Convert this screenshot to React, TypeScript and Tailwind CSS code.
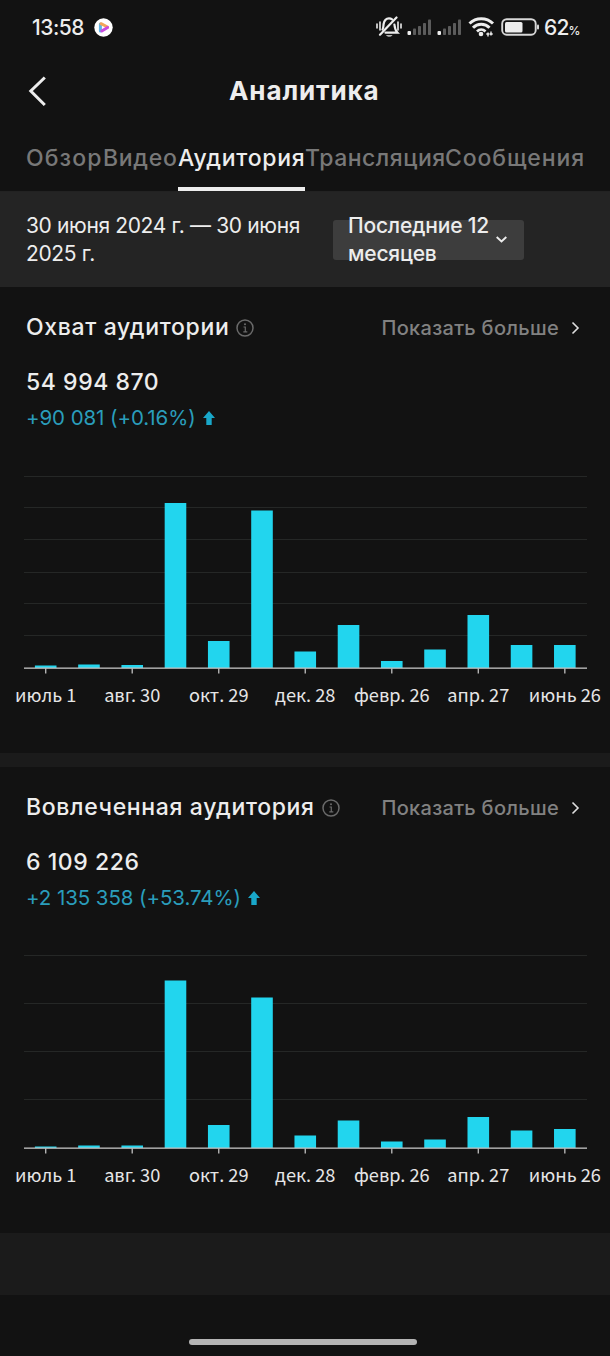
import clsx from "clsx";

const TABS = [
  { label: "Обзор", className: "w-[77px] tracking-[1.1px]" },
  { label: "Видео", className: "w-[75px] tracking-[0.7px]" },
  { label: "Аудитория", className: "w-[127px] tracking-[0.7px]", active: true },
  { label: "Трансляция", className: "w-[140px] tracking-[0.5px]" },
  { label: "Сообщения", className: "w-[140px] tracking-[0.9px]" },
];

const MONTHS = ["июль 1", "авг. 30", "окт. 29", "дек. 28", "февр. 26", "апр. 27", "июнь 26"];

const REACH = [2.5, 3.5, 3, 165, 27, 157.5, 16.5, 43, 7, 18.5, 53, 23, 23];
const ENGAGED = [1.5, 2.5, 2.5, 167.5, 23, 150.5, 12.5, 27.5, 6.5, 8.5, 31, 17.5, 19];

function SignalIcon() {
  return (
    <svg width="26" height="18" viewBox="0 0 26 18" fill="#5c5c5c">
      <rect x="0.5" y="13" width="3.5" height="4" rx="1" fill="#ededed" />
      <rect x="6" y="10.5" width="3" height="6.5" rx="0.8" />
      <rect x="11" y="8" width="3" height="9" rx="0.8" />
      <rect x="16" y="5" width="3" height="12" rx="0.8" />
      <rect x="21" y="1.5" width="3" height="15.5" rx="0.8" />
    </svg>
  );
}

function StatusBar() {
  return (
    <div className="flex h-[54px] items-center pl-8">
      <span className="w-[62px] pt-px text-[21px] font-medium tracking-[-0.5px] whitespace-nowrap">13:58</span>
      <svg width="19" height="19" viewBox="0 0 19 19">
        <circle cx="9.5" cy="9.5" r="9.2" fill="#fff" />
        <path d="M6.4 13V6" stroke="#5eb4e6" strokeWidth="3" strokeLinecap="round" />
        <path d="M7 5.700L13.500 9" stroke="#f2a65a" strokeWidth="3" strokeLinecap="round" />
        <path d="M13.600 9.500L7.800 13" stroke="#c94be0" strokeWidth="3" strokeLinecap="round" />
      </svg>
      <div className="ml-[263px] flex items-center">
        <svg width="26" height="22" viewBox="0 0 26 22" fill="none" stroke="#ededed" strokeLinecap="round">
          <path d="M1 8v4M4 6v8M22 6v8M25 8v4" strokeWidth="1.600" />
          <path d="M6.500 13.500C7.500 12 7.300 10 7.600 8C8.200 4.500 10.300 2.300 13 2.300c1.300 0 2.300.4 3.100 1M18.400 8.500C18.700 12 19 14 21.500 16.700H9.500" strokeWidth="2.200" />
          <path d="M20.500 1.500L4 18.700" strokeWidth="2.200" />
          <path d="M10 19h6.500c-.8 2.400-5.700 2.400-6.500 0z" fill="#b5b5b5" stroke="none" />
        </svg>
        <div className="ml-[5px] flex gap-1">
          <SignalIcon />
          <SignalIcon />
        </div>
        <svg className="ml-[5px]" width="27" height="20" viewBox="0 0 27 20" fill="none" stroke="#ededed">
          <path d="M1.500 6.500C8 0.200 18.500 0.200 25 6.500" strokeWidth="3" />
          <path d="M5 10.700C9.500 6 17 6 21.500 10.700" strokeWidth="3" />
          <path d="M9 14.500C11.500 12 15 12 17.500 14.500" strokeWidth="2.700" />
          <circle cx="13" cy="17" r="2.300" fill="#ededed" stroke="none" />
          <path d="M20 19.500v-4M23 14.500v4M18.300 17h3M21.700 17h3" strokeWidth="1.400" />
        </svg>
        <svg className="ml-[6px]" width="38" height="18" viewBox="0 0 38 18">
          <rect x="1.200" y="1.200" width="33.500" height="15.500" rx="4.500" fill="none" stroke="#d8d8d8" strokeWidth="1.900" />
          <rect x="4" y="4" width="17.500" height="10.500" rx="1.500" fill="#ededed" />
          <rect x="36" y="6.500" width="2" height="5" rx="1" fill="#d8d8d8" />
        </svg>
      </div>
      <span className="ml-[5px] pt-px text-[21px] font-medium tracking-[-0.8px]">
        62<span className="text-[12px]">%</span>
      </span>
    </div>
  );
}

function InfoIcon() {
  return (
    <svg width="18" height="18" viewBox="0 0 18 18" fill="none" stroke="#6a6a6a">
      <circle cx="9" cy="9" r="8" strokeWidth="1.500" />
      <path d="M7.500 8H9.300V12.700M7.300 12.800H11.300" strokeWidth="1.200" />
      <circle cx="9" cy="5.300" r="1" fill="#6a6a6a" stroke="none" />
    </svg>
  );
}

interface BarChartProps {
  values: number[];
  lines: number[];
}

// Bars hang from a baseline at y=198; labels sit under every second bar.
function BarChart({ values, lines }: BarChartProps) {
  const center = (i: number) => 45.7 + i * 43.26;

  return (
    <svg className="block" width="610" height="250" viewBox="0 0 610 250">
      {lines.map((y) => (
        <rect key={y} x="24" y={y} width="563" height="1" fill="#252726" />
      ))}
      {values.map((value, i) => (
        <rect key={i} x={center(i) - 10.8} y={198 - value} width="21.6" height={value} fill="#22d5ee" />
      ))}
      <rect x="24" y="197.5" width="563" height="1.3" fill="#c4c4c4" />
      {MONTHS.map((month, i) => (
        <g key={month}>
          <rect x={center(i * 2) - 0.7} y="198" width="1.4" height="5.5" fill="#b4b4b4" />
          <text
            x={center(i * 2)}
            y="232"
            textAnchor="middle"
            fill="#e6e6e6"
            className="font-['Noto_Sans_CJK_SC',sans-serif] text-[18.2px]"
          >
            {month}
          </text>
        </g>
      ))}
    </svg>
  );
}

interface MetricSectionProps extends BarChartProps {
  title: string;
  total: string;
  change: string;
}

function MetricSection({ title, total, change, values, lines }: MetricSectionProps) {
  return (
    <section className="h-[466px]">
      <div className="flex h-20 items-center pr-[30px] pl-[26px]">
        <h2 className="text-[23px] font-medium tracking-[0.65px] whitespace-nowrap">{title}</h2>
        <span className="ml-[7px] pt-0.5">
          <InfoIcon />
        </span>
        <a className="ml-auto flex items-center gap-3 pt-0.5 text-[20px] font-medium tracking-[0.3px] whitespace-nowrap text-[#818181]">
          Показать больше
          <svg width="9" height="14" viewBox="0 0 9 14" fill="none" stroke="#dedede" strokeWidth="1.6">
            <path d="M1.500 1.500L7 7L1.500 12.500" />
          </svg>
        </a>
      </div>
      <div className="h-[30px] pl-[26px] text-[23px] leading-[30px] font-medium tracking-[0.55px]">{total}</div>
      <div className="flex h-[42px] items-center gap-[7px] pl-[26px] text-[20.5px] text-[#2a9dbb]">
        <span className="pt-px tracking-[-0.08px]">{change}</span>
        <svg width="12" height="14" viewBox="0 0 12 14" fill="#19a7c9">
          <path d="M6 0L12 7H8.700V14H3.300V7H0Z" />
        </svg>
      </div>
      <div className="mt-[31px]">
        <BarChart values={values} lines={lines} />
      </div>
    </section>
  );
}

export default function App() {
  return (
    <div className="h-[1356px] w-[610px] overflow-hidden bg-[#121212] font-[Inter,sans-serif] text-[#ededed]">
      <StatusBar />
      <header className="flex h-[74px] items-center pl-7">
        <svg width="20" height="32" viewBox="0 0 20 32" fill="none" stroke="#ededed" strokeWidth="3">
          <path d="M16.800 2.500L2.800 16L16.800 30" />
        </svg>
        <h1 className="ml-[181px] pb-0.5 text-[26px] font-bold tracking-[0.9px] whitespace-nowrap">Аналитика</h1>
      </header>
      <nav className="flex h-16 border-b border-[#222] pl-[26px]">
        {TABS.map((tab) => (
          <button
            key={tab.label}
            className={clsx(
              "h-[63px] shrink-0 border-b-4 pt-0.5 text-left text-[23px] font-medium whitespace-nowrap",
              tab.active ? "border-[#ededed]" : "border-transparent text-[#787878]",
              tab.className,
            )}
          >
            {tab.label}
          </button>
        ))}
      </nav>
      <div className="flex h-[95px] items-center bg-[#242424] pl-[26px] text-[21px] leading-[28px]">
        <p className="w-[307px] pt-px tracking-[-0.37px]">
          30 июня 2024 г. — 30 июня
          <br />
          2025 г.
        </p>
        <button className="flex h-10 w-[191px] items-center rounded-[3px] bg-[#3d3d3d] pl-[15px] text-left font-medium tracking-[-0.2px]">
          <span className="w-[148px] pt-px whitespace-nowrap">
            Последние 12
            <br />
            месяцев
          </span>
          <svg width="11" height="7" viewBox="0 0 11 7" fill="none" stroke="#ededed" strokeWidth="1.9">
            <path d="M0.700 1L5.500 5.500L10.300 1" />
          </svg>
        </button>
      </div>
      <MetricSection
        title="Охват аудитории"
        total="54 994 870"
        change="+90 081 (+0.16%)"
        values={REACH}
        lines={[6, 37, 69, 102, 133, 165]}
      />
      <div className="h-[14px] bg-[#1b1b1b]" />
      <MetricSection
        title="Вовлеченная аудитория"
        total="6 109 226"
        change="+2 135 358 (+53.74%)"
        values={ENGAGED}
        lines={[5, 53, 101, 149]}
      />
      <div className="h-[62px] bg-[#1b1b1b]" />
      <div className="flex h-[61px] items-end justify-center pr-1 pb-[11px]">
        <div className="h-[6px] w-[228px] rounded-full bg-[#b4b4b4]" />
      </div>
    </div>
  );
}
